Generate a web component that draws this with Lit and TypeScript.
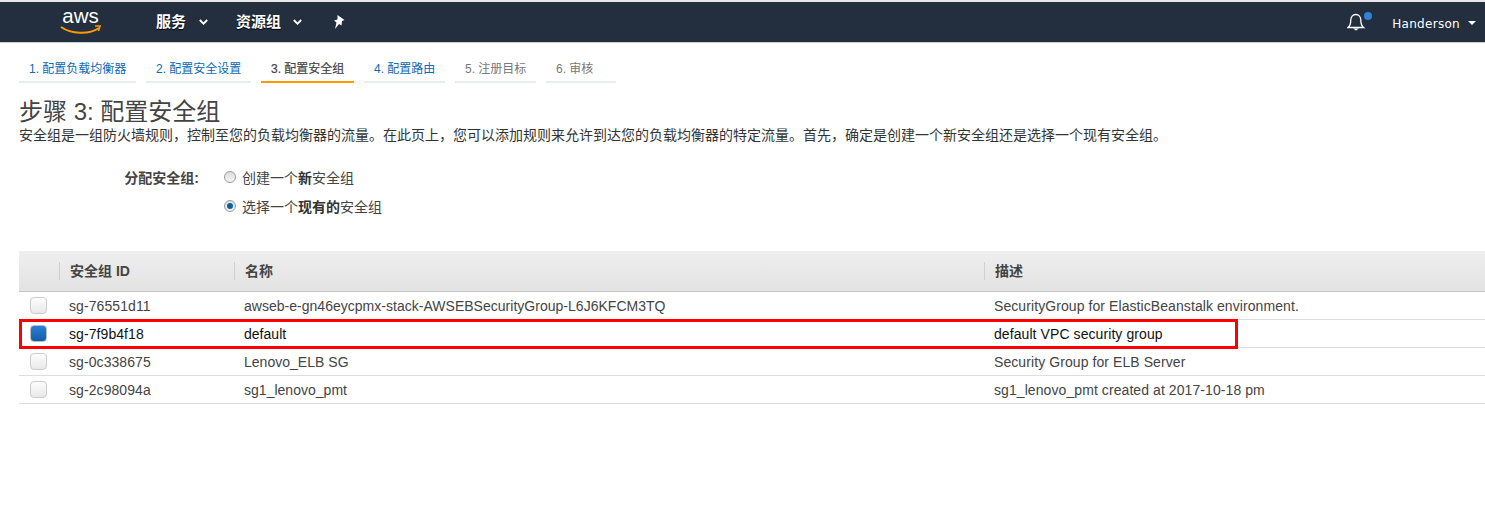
import { LitElement, html, css, svg } from "lit";
import { customElement } from "lit/decorators.js";

const tabs = [
  { t: "1. 配置负载均衡器", w: 117, c: "link" },
  { t: "2. 配置安全设置", w: 105, c: "link" },
  { t: "3. 配置安全组", w: 93, c: "active" },
  { t: "4. 配置路由", w: 81, c: "link" },
  { t: "5. 注册目标", w: 81, c: "off" },
  { t: "6. 审核", w: 70, c: "off" },
];
const rows = [
  ["sg-76551d11", "awseb-e-gn46eycpmx-stack-AWSEBSecurityGroup-L6J6KFCM3TQ", "SecurityGroup for ElasticBeanstalk environment."],
  ["sg-7f9b4f18", "default", "default VPC security group"],
  ["sg-0c338675", "Lenovo_ELB SG", "Security Group for ELB Server"],
  ["sg-2c98094a", "sg1_lenovo_pmt", "sg1_lenovo_pmt created at 2017-10-18 pm"],
];
const chevron = svg`<svg class="chev" width="9" height="6" viewBox="0 0 9 6"><path d="M.8 1l3.700 3.700L8.200 1" fill="none" stroke="#fff" stroke-width="1.800"/></svg>`;

@customElement("app-root")
export class AppRoot extends LitElement {
  static styles = css`
    :host { display: block; width: 1485px; height: 523px; background: #fff; overflow: hidden; position: relative; font-family: "Liberation Sans", "Noto Sans CJK SC", sans-serif; color: #444; }
    .top { height: 2px; background: #e8e8e8; }
    nav { height: 40px; background: #232f3e; border-bottom: 1px solid #ccc; display: flex; align-items: center; color: #fff; }
    .logo { margin-left: 59px; width: 43px; height: 34px; display: block; margin-top: -2px; }
    .menu { display: flex; align-items: center; font-size: 15px; font-weight: 700; text-shadow: 0 1px 1px #000; margin-bottom: 3px; }
    .chev { margin-left: 12px; margin-top: 2px; display: block; }
    .m1 { margin-left: 54px; }
    .m1 .chev { margin-left: 13px; }
    .m2 { margin-left: 28px; }
    .pin { margin-left: 31px; display: block; }
    .spacer { flex: 1; }
    .bell { display: block; margin-right: 19px; }
    .user { font-family: "DejaVu Sans", sans-serif; font-size: 12px; letter-spacing: 0.3px; margin-top: 4px; }
    .caret { width: 0; height: 0; border: 4px solid transparent; border-top: 4px solid #fff; border-bottom: 0; margin: 1px 9px 0 8px; }
    .tabs { display: flex; gap: 10px; padding: 17px 0 0 19px; }
    .tab { height: 21px; border-bottom: 2px solid #eaeded; padding-left: 10px; font-size: 12px; line-height: 19px; white-space: nowrap; }
    .link { color: #0b6ab5; }
    .active { color: #444; border-bottom-color: #f90; -webkit-text-stroke: 0.2px #444; }
    .off { color: #777; }
    h1 { margin: 14px 0 0 19px; font-size: 24px; font-weight: 400; line-height: 29px; color: #444; }
    .desc { margin: 1px 0 0 19px; font-size: 14px; line-height: 17px; color: #333; white-space: nowrap; }
    .assign { display: grid; grid-template-columns: 199px auto; grid-auto-rows: 29px; margin-top: 18px; align-items: center; font-size: 14px; color: #444; width: max-content; }
    .assign b { text-align: right; }
    .radio { display: flex; align-items: center; margin-left: 25px; gap: 6px; }
    .radio b { color: #333; }
    .dot { width: 10px; height: 10px; border-radius: 50%; border: 1px solid #999; background: linear-gradient(#ddd, #f4f4f4); display: flex; align-items: center; justify-content: center; }
    .dot i { display: block; width: 6px; height: 6px; border-radius: 50%; background: #0a5f9e; }
    .table { margin: 31px 0 0 19px; width: 1466px; font-size: 14px; letter-spacing: 0.08px; }
    .head, .row { display: grid; grid-template-columns: 40px 175px 750px 1fr; }
    .head { height: 40px; background: linear-gradient(#eee, #e3e3e3); border-bottom: 1px solid #c4c4c4; align-items: center; font-weight: 700; color: #444; letter-spacing: 0; }
    .head > div { height: 18px; line-height: 18px; padding-left: 10px; border-left: 1px solid #cfcfcf; white-space: nowrap; }
    .head > div:first-child { border-left: 0; padding: 0; }
    .row { height: 27px; border-bottom: 1px solid #ddd; align-items: center; color: #444; line-height: 27px; white-space: nowrap; }
    .row div { padding: 1px 0 0 10px; }
    .row .name { letter-spacing: 0.02px; }
    .row.sel { color: #111; }
    .cb { width: 15px; height: 15px; border: 1px solid #ccc; border-radius: 4px; background: linear-gradient(#fdfdfd, #e8e8e8); margin-left: 11px; margin-top: -1px; }
    .sel .cb { background: linear-gradient(#2a7fd6, #135ea8); border-color: #bbb; }
    .mark { position: absolute; left: 19px; top: 319px; width: 1219px; height: 30px; box-sizing: border-box; border: 3px solid #f00; pointer-events: none; }
  `;

  render() {
    return html`
      <div class="top"></div>
      <nav>
        <svg class="logo" viewBox="0 0 43 34">
          <text x="21.500" y="19" text-anchor="middle" font-family="Liberation Sans, sans-serif" font-size="20.500" fill="#fff">aws</text>
          <path d="M2 23c10 7 28 8 38 1" fill="none" stroke="#f90" stroke-width="2"/>
          <path d="M36 22l5 0-1.500 5" fill="none" stroke="#f90" stroke-width="1.600"/>
        </svg>
        <div class="menu m1">服务${chevron}</div>
        <div class="menu m2">资源组${chevron}</div>
        <svg class="pin" width="13" height="15" viewBox="0 0 13 15"><path d="M4.500 0l7 5-2.500 1-.5 4.500-2.500-1.500-4 5 1.500-6.500-2.500-2 3.500-1z" fill="#fff"/></svg>
        <div class="spacer"></div>
        <svg class="bell" width="26" height="22" viewBox="0 0 26 22">
          <path d="M1 16.500c2-1.500 2.800-3 2.800-7.500 0-3 2-5.500 5-5.500s5 2.500 5 5.500c0 4.500.8 6 2.800 7.500z" fill="none" stroke="#fff" stroke-width="1.300"/>
          <path d="M6 17.500h6l-3 2z" fill="#fff"/>
          <circle cx="21" cy="5" r="4" fill="#2f83dd"/>
        </svg>
        <div class="user">Handerson</div>
        <div class="caret"></div>
      </nav>
      <div class="tabs">
        ${tabs.map((t) => html`<div class="tab ${t.c}" style="width:${t.w - 10}px">${t.t}</div>`)}
      </div>
      <h1>步骤 3: 配置安全组</h1>
      <p class="desc">安全组是一组防火墙规则，控制至您的负载均衡器的流量。在此页上，您可以添加规则来允许到达您的负载均衡器的特定流量。首先，确定是创建一个新安全组还是选择一个现有安全组。</p>
      <div class="assign">
        <b>分配安全组:</b>
        <div class="radio"><span class="dot"></span><span>创建一个<b>新</b>安全组</span></div>
        <span></span>
        <div class="radio"><span class="dot"><i></i></span><span>选择一个<b>现有的</b>安全组</span></div>
      </div>
      <div class="table">
        <div class="head"><div></div><div>安全组 ID</div><div>名称</div><div>描述</div></div>
        ${rows.map((r, i) => html`<div class="row ${i === 1 ? "sel" : ""}"><span class="cb"></span><div>${r[0]}</div><div class="name">${r[1]}</div><div>${r[2]}</div></div>`)}
      </div>
      <div class="mark"></div>
    `;
  }
}
